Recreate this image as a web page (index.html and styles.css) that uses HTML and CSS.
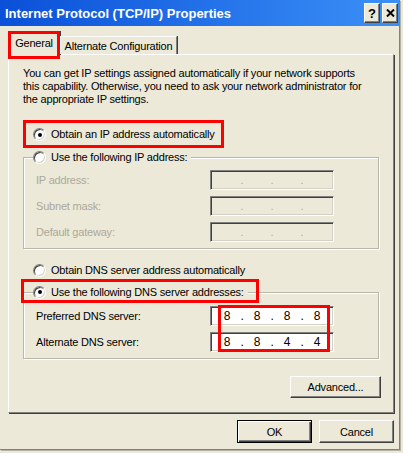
FILE: index.html
```html
<html>
<head>
    <title>Internet Protocol (TCP/IP) Properties</title>
    <meta charset="UTF-8">
    <link rel="stylesheet" href="styles.css">
</head>
<body>
    <div class="window">
        <div class="title-bar">
            <span class="title">Internet Protocol (TCP/IP) Properties</span>
            <div class="title-buttons">
                <button type="button" class="title-btn help">?</button>
                <button type="button" class="title-btn">
                    <svg width="9" height="8" viewBox="0 0 9 8">
                        <path d="M1 0.5 L8 7.5 M8 0.5 L1 7.5" stroke="#000" stroke-width="2"/>
                    </svg>
                </button>
            </div>
        </div>

        <div class="dialog-body">
            <div class="tabs">
                <div class="tab active">General</div>
                <div class="tab">Alternate Configuration</div>
            </div>

            <div class="tab-panel">
                <p class="intro">You can get IP settings assigned automatically if your network supports<br>
                this capability. Otherwise, you need to ask your network administrator for<br>
                the appropriate IP settings.</p>

                <div class="radio-row ip-auto"><span class="radio checked"></span>Obtain an IP address automatically</div>

                <!-- IP address group -->
                <div class="group">
                    <div class="radio-row legend"><span class="radio"></span>Use the following IP address:</div>
                    <div class="field-rows">
                        <div class="field-row disabled">
                            <span class="field-label">IP address:</span>
                            <div class="ip-box"><span></span><i>.</i><span></span><i>.</i><span></span><i>.</i><span></span></div>
                        </div>
                        <div class="field-row disabled">
                            <span class="field-label">Subnet mask:</span>
                            <div class="ip-box"><span></span><i>.</i><span></span><i>.</i><span></span><i>.</i><span></span></div>
                        </div>
                        <div class="field-row disabled">
                            <span class="field-label">Default gateway:</span>
                            <div class="ip-box"><span></span><i>.</i><span></span><i>.</i><span></span><i>.</i><span></span></div>
                        </div>
                    </div>
                </div>

                <div class="radio-row dns-auto"><span class="radio"></span>Obtain DNS server address automatically</div>

                <!-- DNS group -->
                <div class="group dns">
                    <div class="radio-row legend"><span class="radio checked"></span>Use the following DNS server addresses:</div>
                    <div class="field-rows">
                        <div class="field-row">
                            <span class="field-label">Preferred DNS server:</span>
                            <div class="ip-box enabled"><span>8</span><i>.</i><span>8</span><i>.</i><span>8</span><i>.</i><span>8</span></div>
                        </div>
                        <div class="field-row">
                            <span class="field-label">Alternate DNS server:</span>
                            <div class="ip-box enabled"><span>8</span><i>.</i><span>8</span><i>.</i><span>4</span><i>.</i><span>4</span></div>
                        </div>
                    </div>
                </div>

                <div class="advanced-row">
                    <button type="button" class="btn advanced">Advanced...</button>
                </div>
            </div>

            <div class="dialog-buttons">
                <button type="button" class="btn default">OK</button>
                <button type="button" class="btn">Cancel</button>
            </div>
        </div>

        <!-- red annotation boxes -->
        <div class="mark mark-tab"></div>
        <div class="mark mark-ip"></div>
        <div class="mark mark-dns"></div>
        <div class="mark mark-values"></div>
    </div>
</body>
</html>
```

FILE: styles.css
```css
:root {
    --face: #ece9d8;
    --shadow: #808080;
    --dark: #404040;
    --light: #ffffff;
    --disabled: #aca899;
}

body {
    margin: 0;
    background: var(--face);
    font-family: 'Liberation Sans', Arial, sans-serif;
    font-size: 11px;
    letter-spacing: -0.2px;
    color: #000;
}

.window {
    position: relative;
    width: 399px;
    height: 449px;
    background: var(--face);
    border-right: 1px solid var(--shadow);
    border-bottom: 1px solid var(--shadow);
    box-shadow: 1px 1px 0 #b4b2a8;
}

.title-bar {
    height: 26px;
    display: flex;
    align-items: center;
    justify-content: space-between;
    padding: 0 1px 0 5px;
    background: linear-gradient(to right, #0a50d8, #3b90f7);
}

.title {
    color: #fff;
    font-weight: 700;
    font-size: 13px;
    letter-spacing: 0;
}

.title-buttons {
    display: flex;
    gap: 2px;
}

.title-btn {
    width: 16px;
    height: 20px;
    padding: 0;
    display: flex;
    align-items: center;
    justify-content: center;
    background: var(--face);
    border: 1px solid;
    border-color: var(--light) var(--dark) var(--dark) var(--light);
    box-shadow: inset -1px -1px 0 var(--shadow);
    font-family: 'Liberation Sans', Arial, sans-serif;
    font-weight: 700;
    font-size: 13px;
    color: #000;
}

.dialog-body {
    padding: 5px 0 0 8px;
}

/* Tabs */
.tabs {
    display: flex;
    align-items: flex-end;
    height: 23px;
    position: relative;
    z-index: 1;
}

.tab {
    box-sizing: border-box;
    height: 18px;
    width: 117px;
    padding-top: 3px;
    line-height: 13px;
    text-align: center;
    background: var(--face);
    border-top: 1px solid var(--light);
    border-left: 1px solid var(--light);
    border-right: 1px solid var(--shadow);
    box-shadow: 1px 0 0 var(--dark);
}

.tab.active {
    width: 52px;
    height: 24px;
    padding-top: 5px;
    margin-bottom: -1px;
}

.tab-panel {
    box-sizing: border-box;
    width: 386px;
    height: 359px;
    padding: 12px 14px 0 14px;
    border: 1px solid;
    border-color: var(--light) var(--shadow) var(--shadow) var(--light);
    box-shadow: 1px 1px 0 var(--dark);
}

.intro {
    margin: 0;
    line-height: 13px;
}

/* Radio buttons */
.radio-row {
    display: flex;
    align-items: center;
    line-height: 13px;
    height: 13px;
    padding-left: 10px;
}

.radio {
    position: relative;
    box-sizing: border-box;
    width: 13px;
    height: 13px;
    margin-right: 5px;
    border-radius: 50%;
    background: #fff;
    border: 1px solid;
    border-color: var(--shadow) var(--light) var(--light) var(--shadow);
    box-shadow: inset 1px 1px 0 var(--dark), inset -1px -1px 0 #d4d0c8;
}

.radio.checked::after {
    content: '';
    position: absolute;
    left: 3.5px;
    top: 3.5px;
    width: 4px;
    height: 4px;
    border-radius: 50%;
    background: #000;
}

.ip-auto {
    margin-top: 22px;
}

.dns-auto {
    margin-top: 15px;
}

/* Group boxes */
.group {
    box-sizing: border-box;
    width: 356px;
    margin-top: 16px;
    padding: 0 0 6px 12px;
    border: 1px solid #b9b7ab;
    box-shadow: inset 1px 1px 0 var(--light), 1px 1px 0 var(--light);
}

.group.dns {
    margin-top: 15px;
}

.group .legend {
    display: inline-flex;
    height: 14px;
    margin: -8px 0 0 -3px;
    padding: 0 4px 0 0;
    background: var(--face);
}

.field-rows {
    display: flex;
    flex-direction: column;
    gap: 6px;
    margin-top: 6px;
}

.group.dns .field-rows {
    margin-top: 7px;
}

.field-row {
    display: grid;
    grid-template-columns: 174px 124px;
    align-items: center;
    height: 20px;
}

.field-row.disabled {
    color: var(--disabled);
}

.ip-box {
    box-sizing: border-box;
    height: 20px;
    display: flex;
    align-items: center;
    padding-left: 5px;
    background: var(--face);
    border: 1px solid;
    border-color: var(--shadow) var(--light) var(--light) var(--shadow);
    box-shadow: inset 1px 1px 0 var(--dark), inset -1px -1px 0 #d4d0c8;
}

.ip-box.enabled {
    background: #fff;
    font-size: 12px;
}

.ip-box span {
    width: 22px;
    text-align: center;
}

.ip-box i {
    width: 8px;
    text-align: center;
    font-style: normal;
}

/* Buttons */
.btn {
    box-sizing: border-box;
    width: 75px;
    height: 23px;
    padding: 0;
    background: var(--face);
    border: 1px solid;
    border-color: var(--light) var(--dark) var(--dark) var(--light);
    box-shadow: inset -1px -1px 0 var(--shadow);
    font-family: 'Liberation Sans', Arial, sans-serif;
    font-size: 11px;
    letter-spacing: -0.2px;
    color: #000;
}

.btn.default {
    border: 1px solid #000;
    box-shadow: inset 1px 1px 0 var(--light), inset -1px -1px 0 var(--dark), inset -2px -2px 0 var(--shadow);
}

.advanced-row {
    display: flex;
    justify-content: flex-end;
    margin: 17px -2px 0 0;
}

.btn.advanced {
    width: 91px;
    height: 22px;
}

.dialog-buttons {
    width: 386px;
    display: flex;
    justify-content: flex-end;
    gap: 7px;
    margin-top: 7px;
}

/* Red highlight marks drawn over the dialog */
.mark {
    position: absolute;
    box-sizing: border-box;
    border: 3px solid #ff0000;
    z-index: 5;
}

.mark-tab { left: 8px; top: 31px; width: 52px; height: 28px; }
.mark-ip { left: 23px; top: 120px; width: 201px; height: 28px; }
.mark-dns { left: 21px; top: 279px; width: 238px; height: 24px; }
.mark-values { left: 218px; top: 305px; width: 112px; height: 47px; }
```
